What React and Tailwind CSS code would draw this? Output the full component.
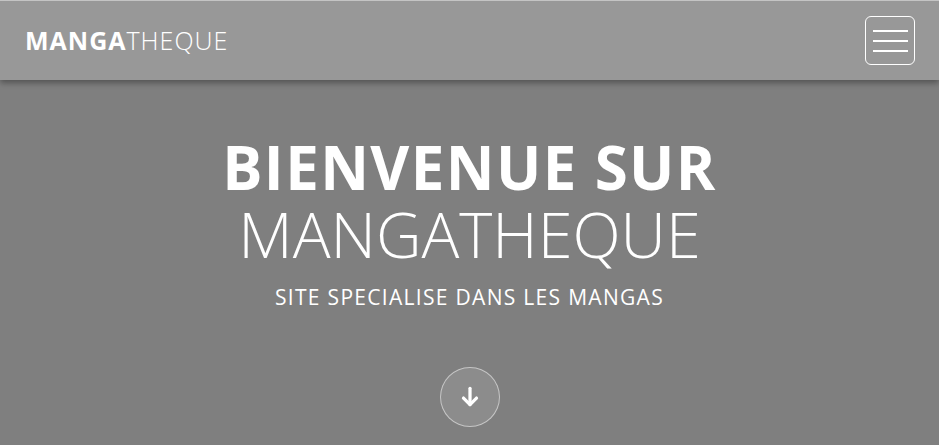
import React from 'react';

const font = { fontFamily: '"Open Sans", "Noto Sans", sans-serif' };

function Navbar() {
  return (
    <nav className="h-[80px] bg-[#989898] border-t border-[#c4c4c4] flex items-center justify-between pl-[25px] pr-[24px] shadow-[0_3px_6px_rgba(0,0,0,0.35)] relative z-10">
      <a href="#" className="text-white text-[25px] leading-none tracking-[1px]">
        <span className="font-bold">MANGA</span>
        <span className="font-light">THEQUE</span>
      </a>
      <button className="w-[50px] h-[49px] border border-white rounded-[6px] flex flex-col items-center justify-center gap-[8px]">
        <span className="block w-[35px] h-[2px] bg-white"></span>
        <span className="block w-[35px] h-[2px] bg-white"></span>
        <span className="block w-[35px] h-[2px] bg-white"></span>
      </button>
    </nav>
  );
}

export default function App() {
  return (
    <div className="w-[939px] h-[445px] overflow-hidden bg-[#7f7f7f] text-white" style={font}>
      <Navbar />
      <header className="flex flex-col items-center pt-[57px]">
        <h1 className="text-[60px] leading-[60px] font-bold tracking-[1.4px]">BIENVENUE SUR</h1>
        <h2 className="mt-[9px] text-[63px] leading-[56px] font-light">MANGATHEQUE</h2>
        <p className="mt-[23px] text-[21px] leading-[24px] tracking-[1.3px]">SITE SPECIALISE DANS LES MANGAS</p>
        <a href="#" className="mt-[58px] w-[60px] h-[60px] rounded-full border border-white/50 bg-white/10 flex items-center justify-center">
          <svg width="26" height="26" viewBox="0 0 24 24" fill="none" stroke="white" strokeWidth="3" strokeLinecap="round" strokeLinejoin="round">
            <path d="M12 4v15" />
            <path d="M6 13l6 6 6-6" />
          </svg>
        </a>
      </header>
    </div>
  );
}
